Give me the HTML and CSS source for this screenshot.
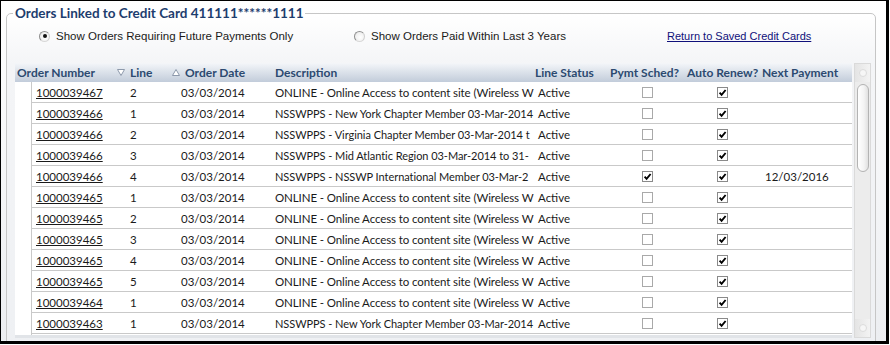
FILE: index.html
```html
<!DOCTYPE html>
<html>
<head>
<meta charset="utf-8">
<link rel="stylesheet" href="styles.css">
</head>
<body>
<div class="frame">
  <fieldset class="box">
    <legend class="legend">Orders Linked to Credit Card 411111******1111</legend>
    <div class="opts">
      <label class="opt opt-a"><span class="radio on"></span><span>Show Orders Requiring Future Payments Only</span></label>
      <label class="opt opt-b"><span class="radio"></span><span>Show Orders Paid Within Last 3 Years</span></label>
      <a class="back" href="#">Return to Saved Credit Cards</a>
    </div>
    <div class="grid">
      <div class="tbl">
        <div class="head">
          <div class="h h-order">Order Number</div>
          <div class="h h-line"><svg class="sort" viewBox="0 0 8 7" width="8" height="7"><path d="M0.5 0.5 H7.5 L4 6.5 Z" fill="#fff" stroke="#8d99ab" stroke-width="1"/></svg>Line</div>
          <div class="h h-date"><svg class="sort" viewBox="0 0 8 7" width="8" height="7"><path d="M0.5 6.5 H7.5 L4 0.5 Z" fill="#fff" stroke="#8d99ab" stroke-width="1"/></svg>Order Date</div>
          <div class="h h-desc">Description</div>
          <div class="h h-status">Line Status</div>
          <div class="h h-pymt">Pymt Sched?</div>
          <div class="h h-auto">Auto Renew?</div>
          <div class="h h-next">Next Payment</div>
        </div>
        <div class="body">
          <div class="strip"></div>
          <div class="rows">
            <div class="row"><div class="c"><a href="#">1000039467</a></div><div class="c">2</div><div class="c">03/03/2014</div><div class="c desc">ONLINE - Online Access to content site (Wireless W</div><div class="c">Active</div><div class="c ck"><span class="cb"></span></div><div class="c ck"><span class="cb on"><svg viewBox="0 0 9 9" width="9" height="9"><path d="M1.6 4.6 L3.6 6.8 L7.6 2" fill="none" stroke="#000" stroke-width="1.9"/></svg></span></div><div class="c next"></div></div>
            <div class="row"><div class="c"><a href="#">1000039466</a></div><div class="c">1</div><div class="c">03/03/2014</div><div class="c desc nss">NSSWPPS - New York Chapter Member 03-Mar-2014</div><div class="c">Active</div><div class="c ck"><span class="cb"></span></div><div class="c ck"><span class="cb on"><svg viewBox="0 0 9 9" width="9" height="9"><path d="M1.6 4.6 L3.6 6.8 L7.6 2" fill="none" stroke="#000" stroke-width="1.9"/></svg></span></div><div class="c next"></div></div>
            <div class="row"><div class="c"><a href="#">1000039466</a></div><div class="c">2</div><div class="c">03/03/2014</div><div class="c desc nss">NSSWPPS - Virginia Chapter Member 03-Mar-2014 t</div><div class="c">Active</div><div class="c ck"><span class="cb"></span></div><div class="c ck"><span class="cb on"><svg viewBox="0 0 9 9" width="9" height="9"><path d="M1.6 4.6 L3.6 6.8 L7.6 2" fill="none" stroke="#000" stroke-width="1.9"/></svg></span></div><div class="c next"></div></div>
            <div class="row"><div class="c"><a href="#">1000039466</a></div><div class="c">3</div><div class="c">03/03/2014</div><div class="c desc nss">NSSWPPS - Mid Atlantic Region 03-Mar-2014 to 31-</div><div class="c">Active</div><div class="c ck"><span class="cb"></span></div><div class="c ck"><span class="cb on"><svg viewBox="0 0 9 9" width="9" height="9"><path d="M1.6 4.6 L3.6 6.8 L7.6 2" fill="none" stroke="#000" stroke-width="1.9"/></svg></span></div><div class="c next"></div></div>
            <div class="row"><div class="c"><a href="#">1000039466</a></div><div class="c">4</div><div class="c">03/03/2014</div><div class="c desc nss">NSSWPPS - NSSWP International Member 03-Mar-2</div><div class="c">Active</div><div class="c ck"><span class="cb on"><svg viewBox="0 0 9 9" width="9" height="9"><path d="M1.6 4.6 L3.6 6.8 L7.6 2" fill="none" stroke="#000" stroke-width="1.9"/></svg></span></div><div class="c ck"><span class="cb on"><svg viewBox="0 0 9 9" width="9" height="9"><path d="M1.6 4.6 L3.6 6.8 L7.6 2" fill="none" stroke="#000" stroke-width="1.9"/></svg></span></div><div class="c next">12/03/2016</div></div>
            <div class="row"><div class="c"><a href="#">1000039465</a></div><div class="c">1</div><div class="c">03/03/2014</div><div class="c desc">ONLINE - Online Access to content site (Wireless W</div><div class="c">Active</div><div class="c ck"><span class="cb"></span></div><div class="c ck"><span class="cb on"><svg viewBox="0 0 9 9" width="9" height="9"><path d="M1.6 4.6 L3.6 6.8 L7.6 2" fill="none" stroke="#000" stroke-width="1.9"/></svg></span></div><div class="c next"></div></div>
            <div class="row"><div class="c"><a href="#">1000039465</a></div><div class="c">2</div><div class="c">03/03/2014</div><div class="c desc">ONLINE - Online Access to content site (Wireless W</div><div class="c">Active</div><div class="c ck"><span class="cb"></span></div><div class="c ck"><span class="cb on"><svg viewBox="0 0 9 9" width="9" height="9"><path d="M1.6 4.6 L3.6 6.8 L7.6 2" fill="none" stroke="#000" stroke-width="1.9"/></svg></span></div><div class="c next"></div></div>
            <div class="row"><div class="c"><a href="#">1000039465</a></div><div class="c">3</div><div class="c">03/03/2014</div><div class="c desc">ONLINE - Online Access to content site (Wireless W</div><div class="c">Active</div><div class="c ck"><span class="cb"></span></div><div class="c ck"><span class="cb on"><svg viewBox="0 0 9 9" width="9" height="9"><path d="M1.6 4.6 L3.6 6.8 L7.6 2" fill="none" stroke="#000" stroke-width="1.9"/></svg></span></div><div class="c next"></div></div>
            <div class="row"><div class="c"><a href="#">1000039465</a></div><div class="c">4</div><div class="c">03/03/2014</div><div class="c desc">ONLINE - Online Access to content site (Wireless W</div><div class="c">Active</div><div class="c ck"><span class="cb"></span></div><div class="c ck"><span class="cb on"><svg viewBox="0 0 9 9" width="9" height="9"><path d="M1.6 4.6 L3.6 6.8 L7.6 2" fill="none" stroke="#000" stroke-width="1.9"/></svg></span></div><div class="c next"></div></div>
            <div class="row"><div class="c"><a href="#">1000039465</a></div><div class="c">5</div><div class="c">03/03/2014</div><div class="c desc">ONLINE - Online Access to content site (Wireless W</div><div class="c">Active</div><div class="c ck"><span class="cb"></span></div><div class="c ck"><span class="cb on"><svg viewBox="0 0 9 9" width="9" height="9"><path d="M1.6 4.6 L3.6 6.8 L7.6 2" fill="none" stroke="#000" stroke-width="1.9"/></svg></span></div><div class="c next"></div></div>
            <div class="row"><div class="c"><a href="#">1000039464</a></div><div class="c">1</div><div class="c">03/03/2014</div><div class="c desc">ONLINE - Online Access to content site (Wireless W</div><div class="c">Active</div><div class="c ck"><span class="cb"></span></div><div class="c ck"><span class="cb on"><svg viewBox="0 0 9 9" width="9" height="9"><path d="M1.6 4.6 L3.6 6.8 L7.6 2" fill="none" stroke="#000" stroke-width="1.9"/></svg></span></div><div class="c next"></div></div>
            <div class="row"><div class="c"><a href="#">1000039463</a></div><div class="c">1</div><div class="c">03/03/2014</div><div class="c desc nss">NSSWPPS - New York Chapter Member 03-Mar-2014</div><div class="c">Active</div><div class="c ck"><span class="cb"></span></div><div class="c ck"><span class="cb on"><svg viewBox="0 0 9 9" width="9" height="9"><path d="M1.6 4.6 L3.6 6.8 L7.6 2" fill="none" stroke="#000" stroke-width="1.9"/></svg></span></div><div class="c next"></div></div>
          </div>
        </div>
      </div>
      <div class="sb">
        <div class="sb-btn"><span class="sb-dot"></span></div>
        <div class="sb-thumb"></div>
        <div class="sb-track"></div>
        <div class="sb-btn sb-btn-down"><span class="sb-dot"></span></div>
      </div>
    </div>
  </fieldset>
</div>
</body>
</html>
```

FILE: styles.css
```css
* { box-sizing: border-box; }
html, body { margin: 0; padding: 0; background: #fff; }
body { font-family: "Liberation Sans", Arial, sans-serif; }

.frame {
  width: 889px;
  height: 344px;
  border: 1px solid #000;
  border-right-width: 3px;
  border-bottom-width: 3px;
  background: linear-gradient(#ffffff, #eceef1);
  overflow: hidden;
  padding: 4px 0 0 5px;
}

.box {
  margin: 0;
  width: 870px;
  height: 360px;
  border: 1px solid #c6c6c6;
  border-radius: 5px;
  padding: 0 4px 0 8px;
  background: linear-gradient(#ffffff 0, #f4f5f7 50px, #eef0f3 100%);
}

.legend {
  font-family: Lato, "Liberation Sans", sans-serif;
  font-weight: bold;
  font-size: 13.5px;
  line-height: 16px;
  color: #1d3d6e;
  padding: 0 2px;
  margin-left: -2px;
}

.opts {
  display: flex;
  align-items: center;
  height: 20px;
  margin-top: 5px;
  font-size: 11.5px;
  color: #1a1a1a;
}
.opt { display: flex; align-items: center; gap: 6px; }
.opt-a { margin-left: 24px; width: 315px; }
.opt-b { width: 313px; }
.back { color: #10107a; text-decoration: underline; font-size: 11px; }

.radio {
  width: 11px; height: 11px;
  border-radius: 50%;
  border: 1px solid #8f8f8f;
  border-right-color: #cfcfcf;
  border-bottom-color: #d8d8d8;
  background: radial-gradient(circle at 60% 60%, #ffffff 0, #eeeeee 70%);
  display: flex; align-items: center; justify-content: center;
}
.radio.on::after {
  content: "";
  width: 4px; height: 4px;
  border-radius: 50%;
  background: #111;
}

.grid {
  display: flex;
  gap: 2px;
  margin-top: 17px;
  height: 275px;
}

.tbl {
  width: 837px;
  display: flex;
  flex-direction: column;
  background: #fff;
  border-bottom: 3px solid #e1e4e8;
  overflow: hidden;
}

.head {
  display: flex;
  height: 19px;
  flex: none;
  background: linear-gradient(#f4f6f9, #dde3eb 45%, #c2ccda);
  font-family: Lato, "Liberation Sans", sans-serif;
  font-weight: bold;
  font-size: 12px;
  color: #2c4a70;
  align-items: center;
}
.h { padding-left: 4px; white-space: nowrap; display: flex; align-items: center; }
.sort { margin-right: 5px; }
.h-order { width: 98px; padding-left: 2px; }
.h-line { width: 55px; }
.h-date { width: 103px; }
.h-desc { width: 260px; }
.h-status { width: 75px; }
.h-pymt { width: 77px; }
.h-auto { width: 75px; }
.h-next { width: 94px; }

.body { display: flex; flex: 1; }
.strip { width: 17px; border-right: 1px solid #c9c9c9; flex: none; }
.rows { flex: 1; }

.row {
  display: grid;
  grid-template-columns: 94px 51px 94px 263px 76px 75px 75px 92px;
  height: 21px;
  font-family: Lato, "Liberation Sans", sans-serif;
  font-size: 11.5px;
  color: #1a1a1a;
}
.c {
  border-bottom: 1px solid #c9c9c9;
  padding-left: 4px;
  display: flex;
  align-items: center;
  white-space: nowrap;
  overflow: hidden;
}
.c a { color: #1a1a1a; text-decoration: underline; }
.desc { padding-right: 0; letter-spacing: -0.1px; }
.desc.nss { font-size: 11px; letter-spacing: -0.05px; }
.next { padding-left: 5px; }
.ck { justify-content: center; padding-left: 0; }

.cb {
  width: 11px; height: 11px;
  border: 1px solid #a9a9a9;
  background: #fff;
  display: flex; align-items: center; justify-content: center;
}
.cb.on { border-color: #8a8a8a; }

.sb {
  width: 17px;
  display: flex;
  flex-direction: column;
  background: #ececec;
  border: 1px solid #dadada;
}
.sb-btn {
  height: 18px;
  display: flex; align-items: center; justify-content: center;
  background: linear-gradient(90deg, #e4e4e4, #f3f3f3);
}
.sb-dot {
  width: 8px; height: 8px; border-radius: 50%;
  background: #f6f6f6;
  border: 1px solid #dcdcdc;
}
.sb-thumb {
  height: 88px;
  margin: 2px 1px 0 2px;
  border: 1px solid #b3b3b3;
  border-radius: 7px;
  background: linear-gradient(90deg, #ffffff, #f3f3f3 60%, #e0e0e0);
}
.sb-track { flex: 1; }
```
